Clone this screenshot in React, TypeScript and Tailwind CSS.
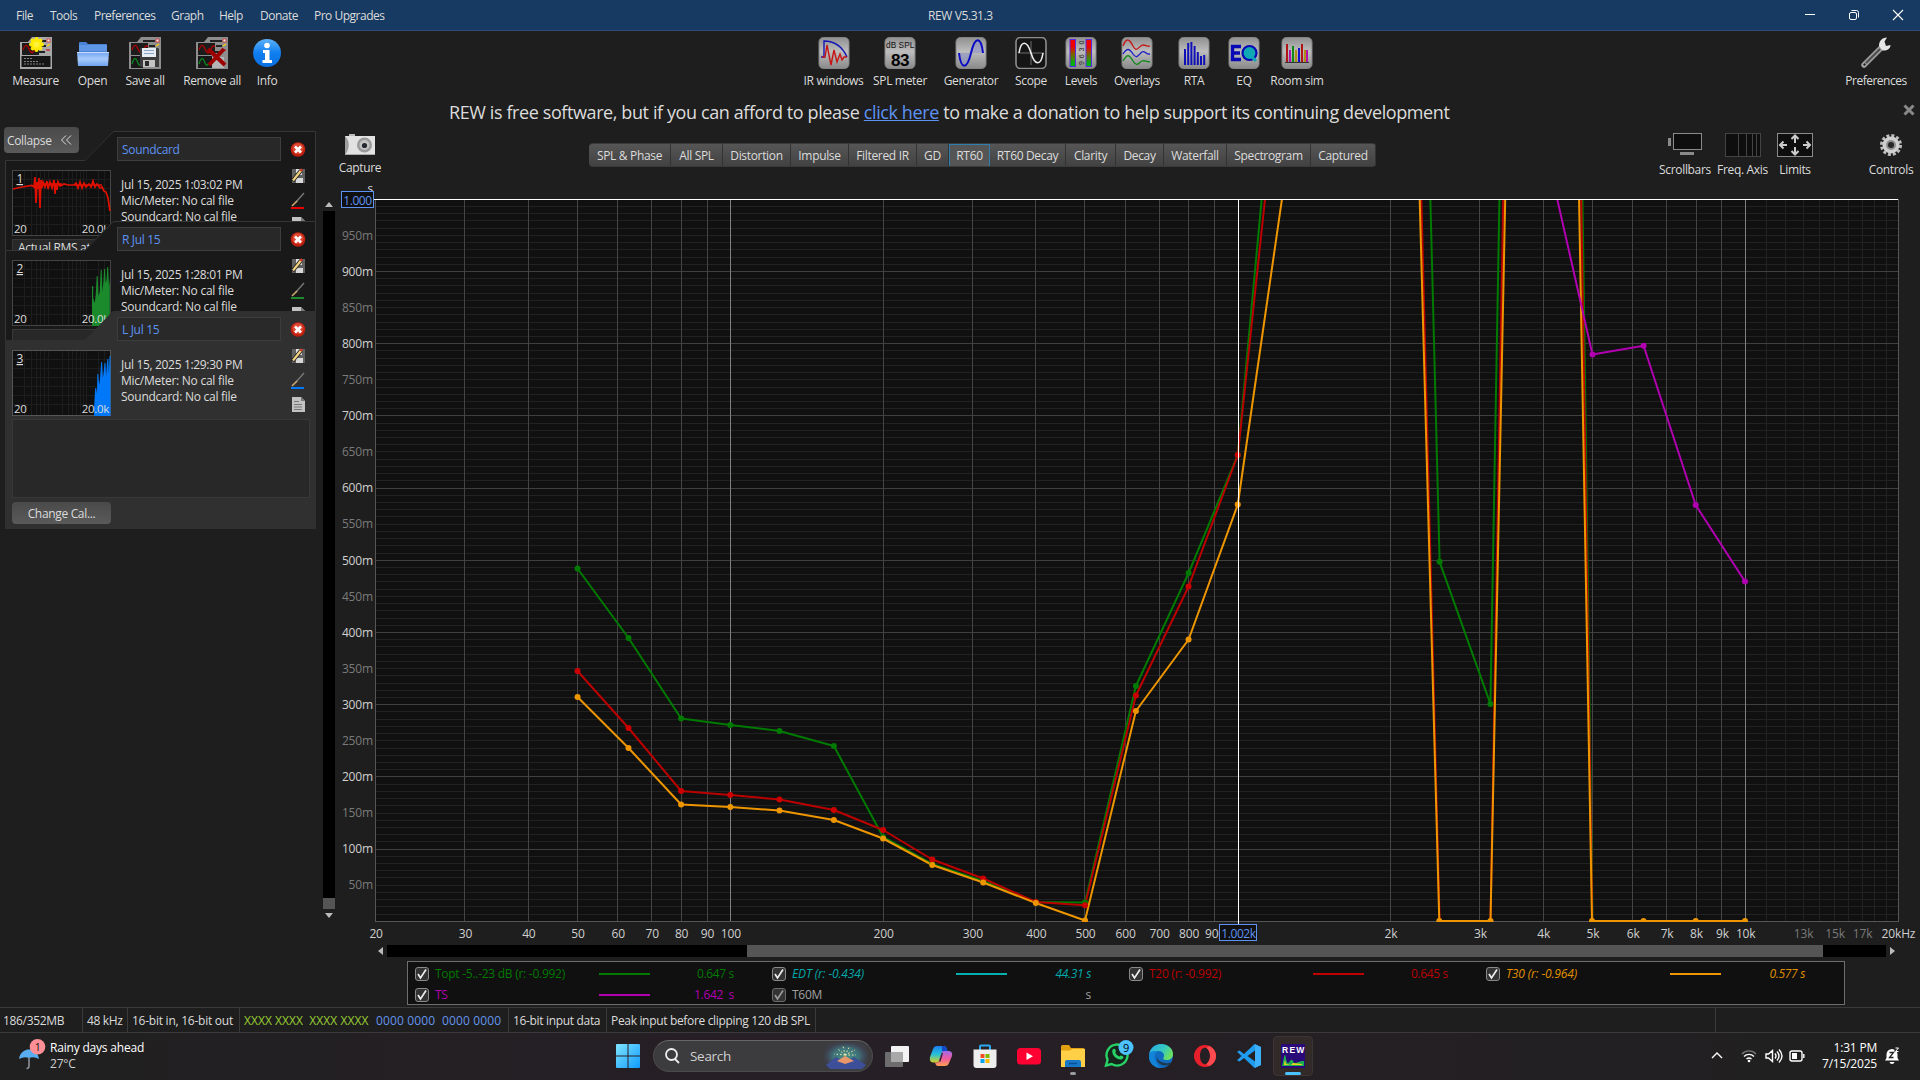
import React from "react";

const SEGOE = "font-['Open_Sans','Noto_Sans',sans-serif]";

/* ---------- toolbar icons ---------- */

function MeasureBase({ children, light = false }: { children?: React.ReactNode; light?: boolean }) {
  return (
    <svg width="32" height="32" viewBox="0 0 32 32">
      <path d="M0 5h8l4-5h20v32H0z" fill={light ? "#a8a8a8" : "#8e8e8e"} />
      <rect x="2" y="6" width="17" height="12" fill="#1c1c1c" />
      <path d="M3 13c2-6 4-6 6-1s4 5 6 0 3-3 4-2" fill="none" stroke="#b00000" strokeWidth="1.3" />
      <path d="M14 4h12M20 9h6M18 15h7" stroke="#222" strokeWidth="2" />
      <rect x="27" y="2" width="3" height="3" fill="#f5e8e8" stroke="#c33" strokeWidth=".8" />
      <path d="m27 9 3-2" stroke="#fc0" strokeWidth="1.4" />
      <path d="M26 13h4" stroke="#c00" strokeWidth="1" />
      {children}
    </svg>
  );
}

const IconMeasure = () => (
  <MeasureBase light>
    <rect x="1.5" y="19" width="29" height="11" fill="#161616" />
    <path d="M4 21.500h9M4 24.500h14M4 27h20" stroke="#999" strokeWidth=".8" strokeDasharray="2 1" />
    <g stroke="#ffea00" strokeWidth="4" strokeLinecap="round">
      <path d="M16.500 2v11M11 7.500h11M12.600 3.600l7.800 7.800M20.400 3.600l-7.800 7.800" />
    </g>
    <circle cx="16.500" cy="7.500" r="3" fill="#fff23a" />
  </MeasureBase>
);

const IconSave = () => (
  <MeasureBase>
    <rect x="2" y="19" width="12" height="12" fill="#181818" />
    <path d="M3 27c2-7 4-7 6-1 1 3 3 3 4 0" fill="none" stroke="#0a8a20" strokeWidth="1.3" />
    <path d="M11 11h18l1 1v18H12l-1-1z" fill="#3c3c3c" />
    <rect x="13" y="11" width="14" height="9" fill="#e6edf5" />
    <path d="M15 13.500h10M15 16.500h10" stroke="#8aa5c4" />
    <rect x="14" y="23" width="12" height="7" fill="#c4c4c4" />
    <rect x="16" y="24" width="4" height="5" fill="#2b2b2b" />
  </MeasureBase>
);

const IconRemove = () => (
  <MeasureBase>
    <rect x="2" y="19" width="14" height="12" fill="#181818" />
    <path d="M3 27c2-7 4-7 6-1 1 3 3 3 4 0" fill="none" stroke="#0a8a20" strokeWidth="1.3" />
    <path d="M16 20h12v11H16z" fill="#b5b5b5" />
    <path d="m12 12 17 16M28 12 13 28" stroke="#9c0000" strokeWidth="4" />
  </MeasureBase>
);

const IconOpen = () => (
  <svg width="32" height="32" viewBox="0 0 32 32">
    <defs>
      <linearGradient id="fo" x2="0" y2="1">
        <stop stopColor="#6fa3f0" />
        <stop offset=".5" stopColor="#a9cbfb" />
        <stop offset="1" stopColor="#6ea2ee" />
      </linearGradient>
    </defs>
    <path d="M2 6q0-1 1-1h6l2 2h18q1 0 1 1v8H2z" fill="#4a82d8" />
    <path d="M2 8h28v6H2z" fill="#5f96e6" />
    <path d="M0 15h32l-1 14H1z" fill="url(#fo)" />
    <path d="M0 15.500h32" stroke="#c6ddff" />
  </svg>
);

const IconInfo = () => (
  <svg width="32" height="32" viewBox="0 0 32 32">
    <defs>
      <linearGradient id="inf" x2="0" y2="1">
        <stop stopColor="#5db1fa" />
        <stop offset=".5" stopColor="#0f7ef0" />
        <stop offset="1" stopColor="#0b6fe0" />
      </linearGradient>
    </defs>
    <circle cx="16" cy="16" r="14" fill="url(#inf)" />
    <circle cx="16" cy="8.500" r="2.800" fill="#fff" />
    <path d="M12 13h6.500v10H21v3H11.500v-3H14v-7h-2z" fill="#fff" />
  </svg>
);

function GrayTile({ children, dark = false }: { children: React.ReactNode; dark?: boolean }) {
  return (
    <svg width="32" height="32" viewBox="0 0 32 32">
      <defs>
        <linearGradient id="tile" x2="0" y2="1">
          <stop stopColor="#909090" />
          <stop offset=".45" stopColor="#bdbdbd" />
          <stop offset="1" stopColor="#8a8a8a" />
        </linearGradient>
      </defs>
      <rect x="1" y=".5" width="30" height="31" rx="4.500" fill={dark ? "#151515" : "url(#tile)"} stroke={dark ? "#8e8e8e" : "#858585"} strokeWidth={dark ? 1.6 : 1} />
      {children}
    </svg>
  );
}

const CENTER_TOOLS: { label: string; w: string; icon: React.ReactNode }[] = [
  {
    label: "IR windows", w: "w-[61px]", icon: (
      <GrayTile>
        <path d="M3 20h3V4c10 0 18 5 23 16" fill="none" stroke="#1616b8" strokeWidth="1.400" />
        <path d="M4 20h3l2-12 4 20 3-15 3 12 3-8 2 6 2-3h3" fill="none" stroke="#c81414" strokeWidth="1.400" />
      </GrayTile>
    ),
  },
  {
    label: "SPL meter", w: "w-[72px]", icon: (
      <GrayTile>
        <text x="16" y="11" fontSize="8.300" textAnchor="middle" fill="#111" fontFamily="Liberation Sans, sans-serif" textLength="28">dB SPL</text>
        <text x="16" y="28.500" fontSize="17" fontWeight="700" textAnchor="middle" fill="#000" fontFamily="Liberation Sans, sans-serif">83</text>
      </GrayTile>
    ),
  },
  {
    label: "Generator", w: "w-[70px]", icon: (
      <GrayTile>
        <path d="M4 16c2 18 8 18 11 0zM15 16C19-2 25-2 28 16z" fill="#8f92c8" opacity=".6" />
        <path d="M4 16c2 17 8 17 12 0S26-1 28 16" fill="none" stroke="#0a0ac4" strokeWidth="2" />
      </GrayTile>
    ),
  },
  {
    label: "Scope", w: "w-[50px]", icon: (
      <GrayTile dark>
        <path d="M16 4v24M3 16h26" stroke="#6d6d6d" />
        <path d="M4 16c2-13 8-13 12 0s10 13 12 0" fill="none" stroke="#ececec" strokeWidth="1.600" />
      </GrayTile>
    ),
  },
  {
    label: "Levels", w: "w-[50px]", icon: (
      <GrayTile>
        <defs>
          <linearGradient id="lv" x2="0" y2="1">
            <stop offset=".25" stopColor="#f00000" />
            <stop offset=".55" stopColor="#7a6400" />
            <stop offset=".9" stopColor="#00b414" />
          </linearGradient>
        </defs>
        <rect x="5" y="2.500" width="5.500" height="27" fill="url(#lv)" stroke="#5a2be0" />
        <rect x="21" y="2.500" width="5.500" height="27" fill="url(#lv)" stroke="#5a2be0" />
        <text transform="translate(18.500 28) rotate(-90)" fontSize="7" textLength="24" fill="#222" fontFamily="Liberation Sans, sans-serif">9630</text>
      </GrayTile>
    ),
  },
  {
    label: "Overlays", w: "w-[62px]", icon: (
      <GrayTile>
        <g fill="none" strokeWidth="1.300">
          <path d="M2 9c3-8 6-8 10 0s6-1 10-1 4 2 7 1" stroke="#c41a1a" />
          <path d="M2 17c4-6 6-6 10 0s6 0 9-2 4 3 8 2" stroke="#1a1ac4" />
          <path d="M2 24c4-7 6-7 10 0s6 1 9 0 4 1 8 1" stroke="#0f8a16" />
        </g>
      </GrayTile>
    ),
  },
  {
    label: "RTA", w: "w-[52px]", icon: (
      <GrayTile>
        <path d="M7 12v16M10.200 6v22M13.400 5v23M16.600 9v19M19.800 15v13M23 19v9M26.200 18v10" stroke="#1010b8" strokeWidth="2" />
      </GrayTile>
    ),
  },
  {
    label: "EQ", w: "w-[48px]", icon: (
      <GrayTile>
        <path d="M13 9.500H4.500v13H13M4.500 16H12" fill="none" stroke="#0808b4" strokeWidth="3.400" />
        <circle cx="21.500" cy="16" r="7" fill="#10a8b4" stroke="#0808b4" strokeWidth="2.200" />
        <path d="m23 19 5 5" stroke="#10a8b4" strokeWidth="3" />
      </GrayTile>
    ),
  },
  {
    label: "Room sim", w: "w-[58px]", icon: (
      <GrayTile>
        <path d="M4 25.500h24" stroke="#333" />
        <g strokeWidth="2">
          <path d="M6 7v18M21 7v18" stroke="#b01414" />
          <path d="M9 13v12M26 13v12" stroke="#b012b0" />
          <path d="M12 9v16" stroke="#108a14" />
          <path d="M15 13v12M24 13v12" stroke="#b08c10" />
          <path d="M18 11v14" stroke="#1414c8" />
        </g>
      </GrayTile>
    ),
  },
];

const LEFT_TOOLS = [
  { label: "Measure", w: "w-[71px]", icon: <IconMeasure /> },
  { label: "Open", w: "w-[43px]", icon: <IconOpen /> },
  { label: "Save all", w: "w-[62px]", icon: <IconSave /> },
  { label: "Remove all", w: "w-[72px]", icon: <IconRemove /> },
  { label: "Info", w: "w-[38px]", icon: <IconInfo /> },
];

const IconWrench = () => (
  <svg width="32" height="32" viewBox="0 0 32 32">
    <path d="M4 28 21 11" stroke="#9a9a9a" strokeWidth="5.500" strokeLinecap="round" />
    <path d="M5 27 20 12" stroke="#4c4c4c" strokeWidth="2" />
    <circle cx="4.500" cy="27.500" r="1.700" fill="#1e1e1e" stroke="#ccc" strokeWidth=".8" />
    <path d="M19 9c0-5 3-8.500 8-8.500l-2.500 4L26 9l4.500-1c0 4-4 6-8 5.500z" fill="#e6e6e6" />
  </svg>
);

function ToolButton({ label, w, icon }: { label: string; w: string; icon: React.ReactNode }) {
  return (
    <div className={`flex flex-col items-center ${w}`}>
      {icon}
      <span className={`mt-[3px] whitespace-nowrap leading-[17px] ${label === "Preferences" ? "tracking-[-0.5px]" : ""}`}>{label}</span>
    </div>
  );
}

/* ---------- title bar ---------- */

const MENUS = [
  { t: "File", w: "w-[34px]" },
  { t: "Tools", w: "w-[44px]" },
  { t: "Preferences", w: "w-[77px]" },
  { t: "Graph", w: "w-[48px]" },
  { t: "Help", w: "w-[41px]" },
  { t: "Donate", w: "w-[54px]" },
  { t: "Pro Upgrades", w: "w-[90px]" },
];

function TitleBar() {
  return (
    <div className="flex h-[31px] shrink-0 items-center border-b border-[#2d4d78] bg-[#163a61] text-[#dcdcdc]">
      <div className="flex w-[928px] pl-4 pt-[2px] tracking-[-0.5px]">
        {MENUS.map((m) => (
          <span key={m.t} className={`whitespace-nowrap ${m.w}`}>{m.t}</span>
        ))}
      </div>
      <span className="flex-1 whitespace-nowrap pt-[2px] tracking-[-0.4px]">REW V5.31.3</span>
      <svg width="120" height="30" viewBox="0 0 120 30" fill="none" stroke="#fff">
        <path d="M5 14.500h10" />
        <rect x="49.500" y="12.500" width="7" height="7" rx="1.500" />
        <path d="M51.500 10.500h5q2 0 2 2v5" />
        <path d="m93 10 10 10M103 10 93 20" strokeWidth="1.100" />
      </svg>
    </div>
  );
}

/* ---------- measurement cards ---------- */

type Card = {
  n: number;
  title: string;
  date: string;
  note: string;
  color: string;
  active?: boolean;
  trace: React.ReactNode;
};

const CARDS: Card[] = [
  {
    n: 1, title: "Soundcard", date: "Jul 15, 2025 1:03:02 PM", note: "Actual RMS at", color: "#e60000",
    trace: (
      <path
        d="M1 19 10 17 20 15.500 22 17 23 7 24 33 25 12 26 19 27 8 28 38 29 10 30 18 31 12 33 17 35 11 36 19 38 12 40 18 42 10 43 24 44 13 45 20 46 12 48 16 52 14 56 15 62 15 64 13 66 18 68 12 70 18 72 13 74 17 77 14 79 17 81 11 83 17 85 14 88 18 90 17 92 21 94 22 96 28 98 41M22 14H50M62 15H90"
        fill="none" stroke="#e01000" strokeWidth="1.700"
      />
    ),
  },
  {
    n: 2, title: "R Jul 15", date: "Jul 15, 2025 1:28:01 PM", note: "", color: "#1a8a2c",
    trace: <path d="M80 66V26h1.200v12l1.500 5 1-8 1-19h1l.8 20 1.200-4 1-22h1l.8 22 1-12 .6-11h1l.6 14 1-4 .5-12h1l.8 19 .8-8V66z" fill="#1a8a2c" />,
  },
  {
    n: 3, title: "L Jul 15", date: "Jul 15, 2025 1:29:30 PM", note: "", color: "#0078f8", active: true,
    trace: <path d="M82 66v-8l1.200-20h1l.8 6 .3-20h1l.8 11 1-7 1-16h1l.8 16 1-8 .6-7h1l.6 13 .8-12 .5-5h1l.5 15 .6-18h1V66z" fill="#0078f8" />,
  },
];

const THUMB_V = [12, 19, 24, 28, 32, 36, 50, 56, 60, 64, 68, 71, 74, 86, 92];

function Thumb({ card }: { card: Card }) {
  return (
    <svg width="99" height="66" viewBox="0 0 99 66">
      <rect x=".5" y=".5" width="98" height="65" fill="#101010" stroke={card.active ? "#555" : "#454545"} />
      <g stroke="#1d1d1d">
        {THUMB_V.map((x) => <path key={x} d={`M${x}.500 1v64`} />)}
        {[9, 18, 27, 36, 45, 54].map((y) => <path key={y} d={`M1 ${y}.500h97`} />)}
      </g>
      {card.trace}
      <g fill="#ddd">
        <text x="4.500" y="13" fontSize="12" textDecoration="underline">{card.n}</text>
        <text x="2" y="63" fontSize="11.500">20</text>
        <text x="97" y="63" fontSize="11.500" textAnchor="end">20.0k</text>
      </g>
    </svg>
  );
}

function CardIcons({ color }: { color: string }) {
  return (
    <svg width="18" height="92" viewBox="0 0 18 92" className="ml-[9px]">
      <circle cx="8" cy="7.500" r="7.300" fill="#c02010" />
      <circle cx="8" cy="6.500" r="5.500" fill="#dd4a34" />
      <path d="m5 4.500 6 6M11 4.500l-6 6" stroke="#fff" strokeWidth="2.600" />
      <rect x="2" y="27" width="13" height="14" fill="#606060" />
      <rect x="6" y="27" width="6" height="6" fill="#ddd" />
      <rect x="6" y="36" width="7" height="5" fill="#d8d8d8" />
      <path d="M2.500 39 11 28.500" stroke="#222" strokeWidth="4" />
      <path d="M3 38.500 11 28.500" stroke="#f0d080" strokeWidth="2.200" />
      <path d="m10.500 29 1.500-2" stroke="#d03020" strokeWidth="2.200" />
      <path d="m6 60 8-9" stroke="#777" strokeWidth="1.400" />
      <path d="m2 64 5-5" stroke="#c8a870" strokeWidth="1.600" />
      <rect x="1" y="65" width="13" height="2" fill={color} />
      <path d="M2 75h9l4 4v11H2z" fill="#c2c2c2" />
      <path d="M11 75v4h4" fill="#777" />
      <path d="M4 79.500h5M4 82.500h8M4 85h8M4 87.500h8" stroke="#777" />
    </svg>
  );
}

function MeasurementCard({ card }: { card: Card }) {
  const h = card.active ? "h-[218px]" : "h-[119px]";
  return (
    <div
      className={`relative -mt-[29px] ml-[5px] w-[311px] ${h} ${card.active ? "bg-[#303030]" : "bg-[#191919]"} [clip-path:polygon(0_29px,80px_29px,108px_0,100%_0,100%_100%,0_100%)]`}
    >
      {!card.active && (
        <svg className="absolute inset-0" width="311" height="119" fill="none" stroke="#363636">
          <path d="M.5 119V29.500H80L108.500.5h202V119" />
        </svg>
      )}
      <div className="relative flex h-[108px]">
        <div className="w-[116px] pl-[7px] pt-[39px]"><Thumb card={card} /></div>
        <div className="w-[160px] pt-[6px]">
          <div className={`-ml-[4px] flex h-6 w-[164px] items-center border pl-[4px] pt-[2px] text-[#5e92f2] ${card.active ? "border-[#3c3c3c] bg-[#292929]" : "border-[#3e3e3e] bg-[#282828]"}`}>{card.title}</div>
          <div className="mt-[16px] whitespace-nowrap leading-[16.200px]">
            <div>{card.date}</div>
            <div className="tracking-[-0.26px]">Mic/Meter: No cal file</div>
            <div className="tracking-[-0.26px]">Soundcard: No cal file</div>
          </div>
        </div>
        <div className="pt-[11px]"><CardIcons color={card.color} /></div>
      </div>
      <div className={`relative ml-[7px] w-[298px] overflow-hidden border border-[#383838] bg-[#282828] pl-[5px] leading-[15px] ${card.active ? "h-[79px]" : "h-[40px]"}`}>{card.note}</div>
      {card.active && (
        <div className="ml-[7px] mt-[4px] flex h-[22px] w-[99px] items-center justify-center rounded-[4px] bg-linear-to-b from-[#4a4a4a] to-[#5a5a5a] pt-[2px]">Change Cal...</div>
      )}
    </div>
  );
}

function Sidebar() {
  return (
    <div className="w-[323px] shrink-0 pt-[2px]">
      <div className="ml-1 flex h-[26px] w-[75px] items-center justify-between rounded-[4px] bg-linear-to-b from-[#4a4a4a] to-[#5a5a5a] pl-[3px] pr-[7px]">
        <span className="pt-px">Collapse</span>
        <svg width="11" height="10" viewBox="0 0 11 10" fill="none" stroke="#ddd"><path d="M5 .5.500 5 5 9.500M10 .5 5.500 5 10 9.500" /></svg>
      </div>
      <div className="pt-[7px]">
        {CARDS.map((c) => <MeasurementCard key={c.n} card={c} />)}
      </div>
    </div>
  );
}

/* ---------- graph ---------- */

const TABS = [
  { t: "SPL & Phase", w: "w-[82px]" },
  { t: "All SPL", w: "w-[52px]" },
  { t: "Distortion", w: "w-[68px]" },
  { t: "Impulse", w: "w-[58px]" },
  { t: "Filtered IR", w: "w-[68px]" },
  { t: "GD", w: "w-[32px]" },
  { t: "RT60", w: "w-[41px]" },
  { t: "RT60 Decay", w: "w-[76px]" },
  { t: "Clarity", w: "w-[50px]" },
  { t: "Decay", w: "w-[48px]" },
  { t: "Waterfall", w: "w-[63px]" },
  { t: "Spectrogram", w: "w-[84px]" },
  { t: "Captured", w: "w-[65px]" },
];

function GraphHeader() {
  return (
    <div className="flex h-[60px]">
      <div className="flex w-[74px] flex-col items-center pt-[9px]">
        <svg width="31" height="22" viewBox="0 0 31 22">
          <rect x="4" width="6" height="3" fill="#bbb" />
          <rect x="0" y="2" width="30" height="19" fill="#e2e2e2" />
          <path d="M0 2c6 6 4 14 0 19z" fill="#9e9e9e" />
          <path d="M0 20.500h30" stroke="#aaa" />
          <circle cx="19.500" cy="11" r="7.500" fill="#9a9a9a" />
          <circle cx="19.500" cy="11" r="5" fill="#c4c4c4" />
          <circle cx="19.500" cy="11.500" r="2.600" fill="#26292f" />
        </svg>
        <span className="mt-[4px] leading-4">Capture</span>
      </div>
      <div className="ml-[192px] mt-[18px] flex h-6 w-[787px] overflow-hidden rounded-[4px] border-y border-[#3a3a3a] bg-linear-to-b from-[#565656] to-[#424242]">
        {TABS.map((t) => (
          <div
            key={t.t}
            className={`flex shrink-0 items-center justify-center whitespace-nowrap ${t.w} ${t.t === "RT60" ? "-my-px border border-t-2 border-[#2f7fae] bg-[#555] pt-px" : "border-r border-[#333] pt-[2px]"}`}
          >
            {t.t}
          </div>
        ))}
      </div>
      <div className="ml-[280px] flex pt-[8px] leading-4">
        <div className="flex w-[58px] flex-col items-center">
          <svg width="36" height="24" viewBox="0 0 36 24">
            <rect x="6.500" y=".5" width="28" height="16" fill="#0e0e0e" stroke="#8a8a8a" />
            <rect x="1" y="5" width="3" height="8" fill="#8a8a8a" />
            <rect x="13" y="19" width="14" height="3" fill="#8a8a8a" />
          </svg>
          <span className="mt-[5px]">Scrollbars</span>
        </div>
        <div className="flex w-[57px] flex-col items-center">
          <svg width="36" height="24" viewBox="0 0 36 24">
            <rect x=".5" y=".5" width="35" height="23" fill="#0e0e0e" stroke="#444" />
            <path d="M13.500 0v24M21.500 0v24M27.500 0v24M31.500 0v24" stroke="#444" />
          </svg>
          <span className="mt-[5px] whitespace-nowrap">Freq. Axis</span>
        </div>
        <div className="flex w-[48px] flex-col items-center">
          <svg width="36" height="24" viewBox="0 0 36 24">
            <rect x=".5" y=".5" width="35" height="23" fill="#0e0e0e" stroke="#8a8a8a" />
            <g fill="none" stroke="#ccc" strokeWidth="2">
              <path d="M18 10V3M14.500 6 18 2.500 21.500 6M18 14v7M14.500 18l3.500 3.500 3.500-3.500" />
              <path d="M10 12H3M6.500 8.500 3 12l3.500 3.500M26 12h7M29.500 8.500 33 12l-3.500 3.500" />
            </g>
          </svg>
          <span className="mt-[5px]">Limits</span>
        </div>
        <div className="ml-[46px] flex w-[52px] flex-col items-center">
          <svg width="24" height="24" viewBox="-12 -12 24 24">
            <circle r="9.500" fill="none" stroke="#bdbdbd" strokeWidth="3" strokeDasharray="2.980 2" />
            <circle r="8.500" fill="#cfcfcf" />
            <circle r="5" fill="#8c8c8c" />
            <circle r="3" fill="#262626" />
          </svg>
          <span className="mt-[5px]">Controls</span>
        </div>
      </div>
    </div>
  );
}

const X0 = 730.3;
const DEC = 507.45;
const fx = (f: number) => X0 + DEC * Math.log10(f / 100);
const TOP = 199.3;
const BOTTOM = 921.3;
const vy = (v: number) => BOTTOM - (BOTTOM - TOP) * v;

const BANDS = [50, 63, 80, 100, 125, 160, 200, 250, 315, 400, 500, 630, 800, 1000];
const GREEN = [568.5, 638, 718.500, 725, 731, 746, 837, 864, 881, 902, 902.5, 686, 573, 455];
const RED = [671, 728, 791, 795, 799.5, 810, 830, 859.5, 878.5, 902, 905.3, 695.5, 586.5, 455];
const ORANGE = [697, 748, 804.5, 807, 810.5, 820, 838.5, 865, 882.5, 903, 920.5, 711, 639.5, 504.5];

const toPoints = (ys: number[]) => ys.map((y, i) => `${fx(BANDS[i]).toFixed(1)},${y}`).join(" ");

const MINOR_V = [11, 12, 13, 14, 15, 16, 17, 18, 19].map((k) => k * 1000);
const MAJOR_V = [30, 40, 50, 60, 70, 80, 90, 200, 300, 400, 500, 600, 700, 800, 900, 2000, 3000, 4000, 5000, 6000, 7000, 8000, 9000];
const X_LABELS: [number, string, boolean?][] = [
  [20, "20"], [30, "30"], [40, "40"], [50, "50"], [60, "60"], [70, "70"], [80, "80"], [90, "90"], [100, "100"],
  [200, "200"], [300, "300"], [400, "400"], [500, "500"], [600, "600"], [700, "700"], [800, "800"], [900, "900"],
  [2000, "2k"], [3000, "3k"], [4000, "4k"], [5000, "5k"], [6000, "6k"], [7000, "7k"], [8000, "8k"], [9000, "9k"],
  [10000, "10k"], [13000, "13k", true], [15000, "15k", true], [17000, "17k", true], [20000, "20kHz"],
];

function Plot() {
  const hLines = Array.from({ length: 99 }, (_, i) => i + 1);
  return (
    <svg width="1585" height="757" viewBox="335 185 1585 757" className="block shrink-0 tracking-[-0.15px]">
      <defs>
        <clipPath id="plot"><rect x="375" y="199" width="1524" height="723" /></clipPath>
      </defs>
      <rect x="375" y="199" width="1523" height="722" fill="#101010" />
      <g shapeRendering="crispEdges">
        {hLines.filter((i) => i % 10).map((i) => (
          <rect key={i} x="375" y={Math.round(vy(i / 100) - 0.5)} width="1523" height="1" fill="#222" />
        ))}
        {MINOR_V.map((f) => <rect key={f} x={Math.round(fx(f) - 0.5)} y="199" width="1" height="722" fill="#222" />)}
        {hLines.filter((i) => i % 10 === 0).map((i) => (
          <rect key={i} x="375" y={Math.round(vy(i / 100) - 0.5)} width="1523" height="1" fill="#404040" />
        ))}
        {MAJOR_V.map((f) => <rect key={f} x={Math.round(fx(f) - 0.5)} y="199" width="1" height="722" fill="#444" />)}
        {[100, 10000].map((f) => <rect key={f} x={Math.round(fx(f) - 0.5)} y="199" width="1" height="722" fill="#808080" />)}
        <rect x="375" y="199" width="1" height="723" fill="#555" />
        <rect x="1898" y="199" width="1" height="723" fill="#555" />
        <rect x="375" y="921" width="1524" height="1" fill="#555" />
      </g>
      <g clipPath="url(#plot)" fill="none" strokeWidth="2" strokeLinejoin="round">
        <g stroke="#007a00">
          <polyline points={`${toPoints(GREEN)} 1263,185`} />
          <polyline points="1430,185 1439.600,561.800 1490.400,703.900 1499.700,185" />
          <polyline points="1582.300,185 1592.500,921 1745,921" />
        </g>
        <g stroke="#bb0000">
          <polyline points={`${toPoints(RED)} 1266.500,185`} />
          <polyline points="1421,185 1439.600,921 1490.500,921 1503.500,185" />
          <polyline points="1581,185 1592.300,921 1745,921" />
        </g>
        <g stroke="#ee9600">
          <polyline points={`${toPoints(ORANGE)} 1284,185`} />
          <polyline points="1419.300,185 1439.300,921 1490.500,921 1505.500,185" />
          <polyline points="1578.800,185 1592,921 1745,921" />
        </g>
        <polyline points="1554,185 1592.500,354.600 1643.600,345.800 1695.700,505 1745,581.500" stroke="#b000b0" />
      </g>
      <g clipPath="url(#plot)">
        {BANDS.map((b, i) => (
          <g key={b}>
            <circle cx={fx(b)} cy={GREEN[i]} r="3" fill="#007a00" />
            <circle cx={fx(b)} cy={RED[i]} r="3" fill="#cc0000" />
            <circle cx={fx(b)} cy={ORANGE[i]} r="3" fill="#ee9600" />
          </g>
        ))}
        <circle cx="1439.600" cy="561.800" r="3" fill="#007a00" />
        <circle cx="1490.400" cy="703.900" r="3" fill="#007a00" />
        {[1439.3, 1490.5, 1592, 1643.5, 1695.7, 1745].map((x) => <circle key={x} cx={x} cy="921" r="3" fill="#ee9600" />)}
        {[[1592.5, 354.6], [1643.6, 345.8], [1695.7, 505], [1745, 581.5]].map(([x, y]) => <circle key={x} cx={x} cy={y} r="3" fill="#b000b0" />)}
      </g>
      <g shapeRendering="crispEdges" fill="#fff">
        <rect x="374" y="199" width="1524" height="1" />
        <rect x="1238" y="199" width="1" height="726" />
      </g>
      <g fontSize="12" textAnchor="end">
        <text x="373" y="193" fill="#ddd">s</text>
        {Array.from({ length: 19 }, (_, i) => (i + 1) * 50).map((v) => (
          <text key={v} x="373" y={Math.round(vy(v / 1000) + 4.2)} fill={v % 100 ? "#7a7a7a" : "#d0d0d0"}>{v}m</text>
        ))}
      </g>
      <g fontSize="12" textAnchor="middle">
        {X_LABELS.map(([f, t, dim]) => (
          <text key={f} x={fx(f) + 0.5} y="938" fill={dim ? "#7a7a7a" : "#d0d0d0"}>{t}</text>
        ))}
        <rect x="341.500" y="191.500" width="32" height="16" fill="#101010" stroke="#5e92f2" />
        <text x="357.500" y="205" fill="#5e92f2" className="tracking-[-0.4px]">1.000</text>
        <rect x="1219.500" y="924.500" width="37" height="16" fill="#101010" stroke="#5e92f2" />
        <text x="1238.500" y="938" fill="#5e92f2" className="tracking-[-0.4px]">1.002k</text>
      </g>
    </svg>
  );
}

const TRACES: { name: string; value: string; cls: string; line: string; dim?: boolean }[] = [
  { name: "Topt -5..-23 dB (r: -0.992)", value: "0.647 s", cls: "text-[#007a00]", line: "bg-[#007a00]" },
  { name: "EDT (r: -0.434)", value: "44.31 s", cls: "text-[#00a8a8] italic", line: "bg-[#00b0b0]" },
  { name: "T20 (r: -0.992)", value: "0.645 s", cls: "text-[#bb0000]", line: "bg-[#c00000]" },
  { name: "T30 (r: -0.964)", value: "0.577 s", cls: "text-[#e09000] italic", line: "bg-[#ee9600]" },
  { name: "TS", value: "1.642  s", cls: "text-[#b000b0]", line: "bg-[#b000b0]" },
  { name: "T60M", value: "s", cls: "text-[#a0a0a0]", line: "bg-transparent", dim: true },
];

function Legend() {
  return (
    <div className="ml-[72px] mt-[4px] grid h-[44px] w-[1438px] grid-cols-[repeat(4,357px)] grid-rows-[21px_21px] border border-[#6e6e6e] bg-[#101010] pt-[1px]">
      {TRACES.map((t) => (
        <div key={t.name} className={`flex items-center whitespace-pre pl-[7px] ${t.cls}`}>
          <svg width="14" height="14" viewBox="0 0 14 14" className="shrink-0">
            <rect x=".5" y=".5" width="13" height="13" rx="2.500" fill="#333" stroke={t.dim ? "#6a6a6a" : "#8a8a8a"} />
            <path d="m3 7 2.500 4L11 2.500" fill="none" stroke={t.dim ? "#999" : "#eee"} strokeWidth="1.700" />
          </svg>
          <span className={`ml-[6px] w-[164px] ${t.cls.includes("italic") ? "tracking-[-0.15px]" : "tracking-[-0.27px]"}`}>{t.name}</span>
          <span className={`h-[2px] w-[51px] ${t.line}`} />
          <span className="w-[84px] text-right">{t.value}</span>
        </div>
      ))}
    </div>
  );
}

function Graph() {
  return (
    <div className="flex min-w-0 flex-1 flex-col">
      <GraphHeader />
      <div className="flex h-[757px]">
        <div className="flex w-3 shrink-0 flex-col items-center pt-[17px]">
          <svg width="8" height="5"><path d="M0 5 4 0l4 5z" fill="#bbb" /></svg>
          <div className="mt-[4px] flex h-[698px] w-3 flex-col justify-end bg-black"><div className="h-[11px] bg-[#555]" /></div>
          <svg width="8" height="5" className="mt-[4px]"><path d="M0 0l4 5 4-5z" fill="#bbb" /></svg>
        </div>
        <Plot />
      </div>
      <div className="mt-[3px] flex h-3 items-center pl-[55px]">
        <svg width="5" height="8"><path d="M5 0 0 4l5 4z" fill="#bbb" /></svg>
        <div className="ml-[4px] h-3 w-[1499px] bg-black pl-[360px]"><div className="h-3 w-[1076px] bg-[#555]" /></div>
        <svg width="5" height="8" className="ml-[4px]"><path d="M0 0l5 4-5 4z" fill="#bbb" /></svg>
      </div>
      <div className="pl-[12px]"><Legend /></div>
    </div>
  );
}

/* ---------- status bar ---------- */

function StatusBar() {
  const cell = "flex items-center whitespace-pre border-r border-[#3a3a3a] shrink-0";
  return (
    <div className="flex h-[26px] shrink-0 border-y border-[#3a3a3a]">
      <div className={`${cell} w-[83px] pl-[3px] pt-px`}>186/352MB</div>
      <div className={`${cell} w-[45px] pl-[4px] pt-px`}>48 kHz</div>
      <div className={`${cell} w-[112px] pl-[4px] pt-px tracking-[-0.25px]`}>16-bit in, 16-bit out</div>
      <div className={`${cell} w-[269px] pl-[4px] pt-px`}>
        <span className="w-[132px] text-[#9acd32] tracking-[0.05px]">XXXX XXXX  XXXX XXXX</span>
        <span className="text-[#6495ed] tracking-[0.15px]">0000 0000  0000 0000</span>
      </div>
      <div className={`${cell} w-[98px] pl-[4px] pt-px`}>16-bit input data</div>
      <div className={`${cell} w-[209px] pl-[4px] pt-px`}>Peak input before clipping 120 dB SPL</div>
      <div className={`${cell} w-[900px]`} />
    </div>
  );
}

/* ---------- taskbar ---------- */

const TASK_ICONS: React.ReactNode[] = [
  <svg key="tv" width="24" height="24" viewBox="0 0 24 24"><rect x="6" y="2" width="18" height="16" rx="1" fill="#f2f2f2" /><rect x="0" y="8" width="18" height="15" rx="1" fill="#6d6d6d" /><rect x="6" y="8" width="12" height="10" fill="#a8a8a8" /></svg>,
  <svg key="cp" width="24" height="24" viewBox="0 0 24 24">
    <defs>
      <linearGradient id="c1" x2="0" y2="1"><stop stopColor="#1c7df0" /><stop offset=".5" stopColor="#25c0d8" /><stop offset="1" stopColor="#d8d020" /></linearGradient>
      <linearGradient id="c2" x2="0" y2="1"><stop stopColor="#a06ae8" /><stop offset=".5" stopColor="#ee5aa0" /><stop offset="1" stopColor="#ffa050" /></linearGradient>
    </defs>
    <path d="M8 2h7q2 0 2.600 2L18.500 7H15q-2 0-2.500 2L10 17q-.6 1.500-2 1.500H4Q0 18 1 13L4 5q1-3 4-3z" fill="url(#c1)" />
    <path d="M13 2h2q2 0 2.600 2L18.500 7H15q-1.500 0-2 1z" fill="#1548c8" />
    <path d="M16 22H9q-2 0-2.500-2L6 18.500h2q1.500 0 2-1.500L12.500 9q.5-2 2.500-2h5q4 .5 3 5l-3 7q-1 3-4 3z" fill="url(#c2)" />
    <path d="M11.500 17.500 14 9h-1.200L10 17.500z" fill="#26242a" />
  </svg>,
  <svg key="st" width="24" height="24" viewBox="0 0 24 24"><path d="M7 6V2.500q0-1 1-1h8q1 0 1 1V6" fill="none" stroke="#2aa8f0" strokeWidth="2" /><path d="M.5 5.500h23V21q0 3-3 3h-17q-3 0-3-3z" fill="#eee" /><path d="M7.500 10h4v4h-4z" fill="#f25022" /><path d="M12.500 10h4v4h-4z" fill="#7fba00" /><path d="M7.500 15h4v4h-4z" fill="#00a4ef" /><path d="M12.500 15h4v4h-4z" fill="#ffb900" /></svg>,
  <svg key="yt" width="24" height="24" viewBox="0 0 24 24"><rect y="4" width="24" height="16.500" rx="3.500" fill="#ff0033" /><path d="m9.500 8.500 6.500 3.700-6.500 3.700z" fill="#fff" /></svg>,
  <svg key="fo" width="24" height="24" viewBox="0 0 24 24"><path d="M0 2.500Q0 1 1.500 1H8l2 3h12q2 0 2 2v3H0z" fill="#e0a010" /><path d="M0 6.500h9L11 5h13v18H0z" fill="#ffcf48" /><path d="M4 23v-5q0-2 2-2h12q2 0 2 2v5z" fill="#1878c8" /><path d="M8 19.500h8" stroke="#0b4f90" strokeWidth="1.500" /></svg>,
  <svg key="wa" width="30" height="28" viewBox="0 0 30 28"><path d="m2 25.500 1.600-5.800A10.500 10.500 0 1 1 7.500 24z" fill="#16251c" stroke="#27d366" strokeWidth="2.400" /><path d="M8.500 10c1-2 2.500-1.500 3 0s.5 1.500-.3 2.500c.8 2 2.300 3.300 4.300 4 1-1.200 1.300-1.300 3-.4s1 2.600-.8 3.300C12.500 20.500 7 14 8.500 10z" fill="#27d366" /><circle cx="22" cy="7.500" r="7.500" fill="#4cc2ff" /><text x="22" y="11.500" fontSize="11" textAnchor="middle" fill="#000">9</text></svg>,
  <svg key="ed" width="24" height="24" viewBox="0 0 24 24">
    <defs><linearGradient id="e1" x2="1" y2=".5"><stop stopColor="#2aa8e8" /><stop offset=".6" stopColor="#35c8c0" /><stop offset="1" stopColor="#6be060" /></linearGradient></defs>
    <circle cx="12" cy="12" r="12" fill="#0f6cc0" />
    <path d="M.2 10C1.500 3.500 6.500 0 12 0c7 0 12 4.500 12 10 0 4-3 6-6.500 6-3 0-4-1.300-3-2.500 2-3-1-6.500-5-6.500C5.500 7 1.500 8 .2 10z" fill="url(#e1)" />
    <path d="M8 13c-1 4 2.500 8.500 8 8.500 3 0 5.500-1 7-3.500-2 1-4 1.500-6.500 1C12 18.500 8.500 16.500 8 13z" fill="#26282a" opacity=".75" />
    <path d="M.2 10C1.500 7.500 5 6.500 9 7.500 4 9 4 18 12 24 5 24 0 19 0 13z" fill="#1484d8" />
  </svg>,
  <svg key="op" width="24" height="24" viewBox="0 0 24 24"><path fillRule="evenodd" d="M12 1a11 11 0 1 0 0 22 11 11 0 0 0 0-22zm0 2.800c3 0 5 3.500 5 8.200s-2 8.200-5 8.200-5-3.500-5-8.200 2-8.200 5-8.200z" fill="#e8202c" /><path d="M17 2.300q6 3.500 6 9.700t-6 9.700q-2 .5-3.500-1.800Q17 17 17 12t-3.500-7.900Q15 1.800 17 2.300z" fill="#ff4b50" /></svg>,
  <svg key="vs" width="24" height="24" viewBox="0 0 24 24"><path d="M17.500 0 24 3v18l-6.500 3L7 14l-4.500 3.500L0 16.200 4.500 12 0 7.800l2.500-1.300L7 10zM18 6.500 10.500 12l7.500 5.500z" fill="#1f9cf0" fillRule="evenodd" /><path d="M18 .3 24 3v18l-6 2.800z" fill="#3cb0fa" /></svg>,
];

function Taskbar() {
  return (
    <div className="flex h-[47px] shrink-0 items-center bg-linear-to-r from-[#202020] via-[#271f26] via-45% to-[#202020] pb-px text-white">
      <div className="flex w-[609px] items-center pl-[18px]">
        <svg width="28" height="34" viewBox="0 0 28 34">
          <path d="M1 20C2 13 7 10.500 11 10.500S20 13 21 20q-5-3-10-1-5-2-10 1z" fill="#5aaef0" />
          <path d="M11 19v8q0 2.500-2.500 2.500" fill="none" stroke="#8b9097" strokeWidth="1.600" />
          <circle cx="19.500" cy="7.800" r="7.800" fill="#ff8f96" />
          <text x="19.500" y="11.500" fontSize="10.500" textAnchor="middle" fill="#111">1</text>
        </svg>
        <div className="ml-[4px] leading-4 tracking-[-0.2px]">
          <div className="whitespace-nowrap">Rainy days ahead</div>
          <div className="text-[#d0d0d0]">27°C</div>
        </div>
      </div>
      <div className="flex w-[44px] pl-[7px]">
        <svg width="24" height="24" viewBox="0 0 24 24">
          <defs><linearGradient id="w" x2="1" y2="1"><stop stopColor="#80e4ff" /><stop offset="1" stopColor="#0f9bff" /></linearGradient></defs>
          <path d="M0 1q0-1 1-1h10.500v11.500H0zM12.500 0H23q1 0 1 1v10.500H12.500zM0 12.500h11.500V24H1q-1 0-1-1zM12.500 12.500H24V23q0 1-1 1H12.500z" fill="url(#w)" />
        </svg>
      </div>
      <div className="flex h-8 w-[220px] items-center overflow-hidden rounded-full border border-[#4a4a4a] border-t-[#666] bg-[#3c3b3d] pl-[10px]">
        <svg width="16" height="16" viewBox="0 0 16 16" fill="none" stroke="#eee" strokeWidth="1.800"><circle cx="7.500" cy="6.500" r="5.500" /><path d="m11 11 4 4" /></svg>
        <span className="ml-[10px] w-[134px] text-[13.500px] tracking-[-0.3px] text-[#d0d0d0]">Search</span>
        <svg width="44" height="28" viewBox="0 0 44 28">
          <defs>
            <radialGradient id="fw"><stop stopColor="#4aa898" /><stop offset=".6" stopColor="#3f7d86" /><stop offset="1" stopColor="#44507a" stopOpacity=".2" /></radialGradient>
          </defs>
          <rect width="44" height="28" rx="12" fill="url(#fw)" opacity=".8" />
          <path d="M2 23 12 15l9 5 9-5 12 8-4 4H6z" fill="#3d4f98" />
          <path d="m13 19 8-5 9 5-9 3z" fill="#e8966a" />
          <path d="m21 13-7-6M21 13l-2-9M21 13l5-9M21 13l10-5M21 13h11M21 13l-11-1" stroke="#f8e8b0" strokeDasharray="1.500 2" />
        </svg>
      </div>
      <div className="ml-[2px] flex flex-1">
        {TASK_ICONS.map((ic, i) => (
          <div key={i} className="relative flex h-10 w-11 items-center justify-center">
            {i === 5 ? <div className="mb-[5px] ml-[4px]">{ic}</div> : ic}
            {i === 4 && <span className="absolute bottom-px h-[3px] w-[6px] rounded-full bg-[#9a9a9a]" />}
          </div>
        ))}
        <div className="relative ml-[2px] flex h-10 w-10 items-center justify-center rounded-[4px] border border-[#3d3533] bg-[#322a29]">
          <svg width="24" height="24" viewBox="0 0 24 24">
            <rect width="24" height="24" fill="#2a0a78" />
            <text x="12" y="8.500" fontSize="8.500" fontWeight="700" textAnchor="middle" fill="#fff" textLength="22" fontFamily="Liberation Sans, sans-serif">REW</text>
            <path d="M1 22c1-3 2-11 3-11s1 8 3 8 2-4 4-3 1 3 3 3 4-2 9-2v5z" fill="#18b050" />
            <path d="M3 21c1-6 1-6 2-1l5 1 2-2 9 1v1z" fill="#f0d020" />
          </svg>
          <span className="absolute bottom-0 h-[3px] w-4 rounded-full bg-[#4cc2ff]" />
        </div>
      </div>
      <svg width="100" height="20" viewBox="0 0 100 20" fill="none" stroke="#fff" strokeWidth="1.400" className="mr-[10px]">
        <path d="m7 12 5-5 5 5" />
        <path d="M37 8a9.500 9.500 0 0 1 14 0" stroke="#777" />
        <path d="M39 10.500a7 7 0 0 1 10 0M41.500 13a4 4 0 0 1 5 0" />
        <circle cx="44" cy="15" r="1.300" fill="#fff" stroke="none" />
        <path d="M61 8h2.500l4-3.500v11l-4-3.500H61zM70 7.500q2 2.500 0 5M72 5.500q4 4.500 0 9M74 3.500q6 6.500 0 13" />
        <rect x="85" y="5" width="12" height="10" rx="2" />
        <path d="M98.800 8v4" />
        <path d="M87 7h5v6h-5z" fill="#fff" stroke="none" />
      </svg>
      <div className="w-[62px] text-right leading-4 tracking-[-0.2px]">
        <div className="whitespace-nowrap">1:31 PM</div>
        <div>7/15/2025</div>
      </div>
      <svg width="16" height="18" viewBox="0 0 16 18" className="ml-[7px] mr-[20px] shrink-0">
        <path d="M1 13.500 2.500 11V7.500a5.500 5.500 0 0 1 11 0V11L15 13.500zM5.500 15h5q-.5 2-2.500 2t-2.500-2z" fill="#fff" />
        <path d="M5.500 5.500h4l-4 5h4" fill="none" stroke="#222" strokeWidth="1.300" />
        <path d="M10.500 0h5v5h-5z" fill="#222" />
        <path d="M11.500 1h3l-3 3.500h3" fill="none" stroke="#fff" />
      </svg>
    </div>
  );
}

export default function App() {
  return (
    <div className={`flex h-[1080px] w-[1920px] flex-col overflow-hidden bg-[#1e1e1e] text-[12px] leading-4 tracking-[-0.33px] text-[#dcdcdc] ${SEGOE}`}>
      <TitleBar />
      <div className="flex h-[63px] shrink-0 pt-[6px]">
        <div className="flex w-[803px]">{LEFT_TOOLS.map((t) => <ToolButton key={t.label} {...t} />)}</div>
        <div className="flex flex-1">{CENTER_TOOLS.map((t) => <ToolButton key={t.label} {...t} />)}</div>
        <ToolButton label="Preferences" w="w-[88px]" icon={<IconWrench />} />
      </div>
      <div className="flex h-[31px] shrink-0 items-center">
        <div className="flex-1 whitespace-nowrap pl-[449px] pt-[4px] text-[18px] leading-6 tracking-[-0.4px]">
          REW is free software, but if you can afford to please <span className="text-[#5e92f2] underline">click here</span> to make a donation to help support its continuing development
        </div>
        <svg width="12" height="12" viewBox="0 0 12 12" className="mr-[5px]"><path d="m1.500 1.500 9 9M10.500 1.500l-9 9" stroke="#888" strokeWidth="3" /></svg>
      </div>
      <div className="flex h-[882px] shrink-0">
        <Sidebar />
        <Graph />
      </div>
      <StatusBar />
      <Taskbar />
    </div>
  );
}
